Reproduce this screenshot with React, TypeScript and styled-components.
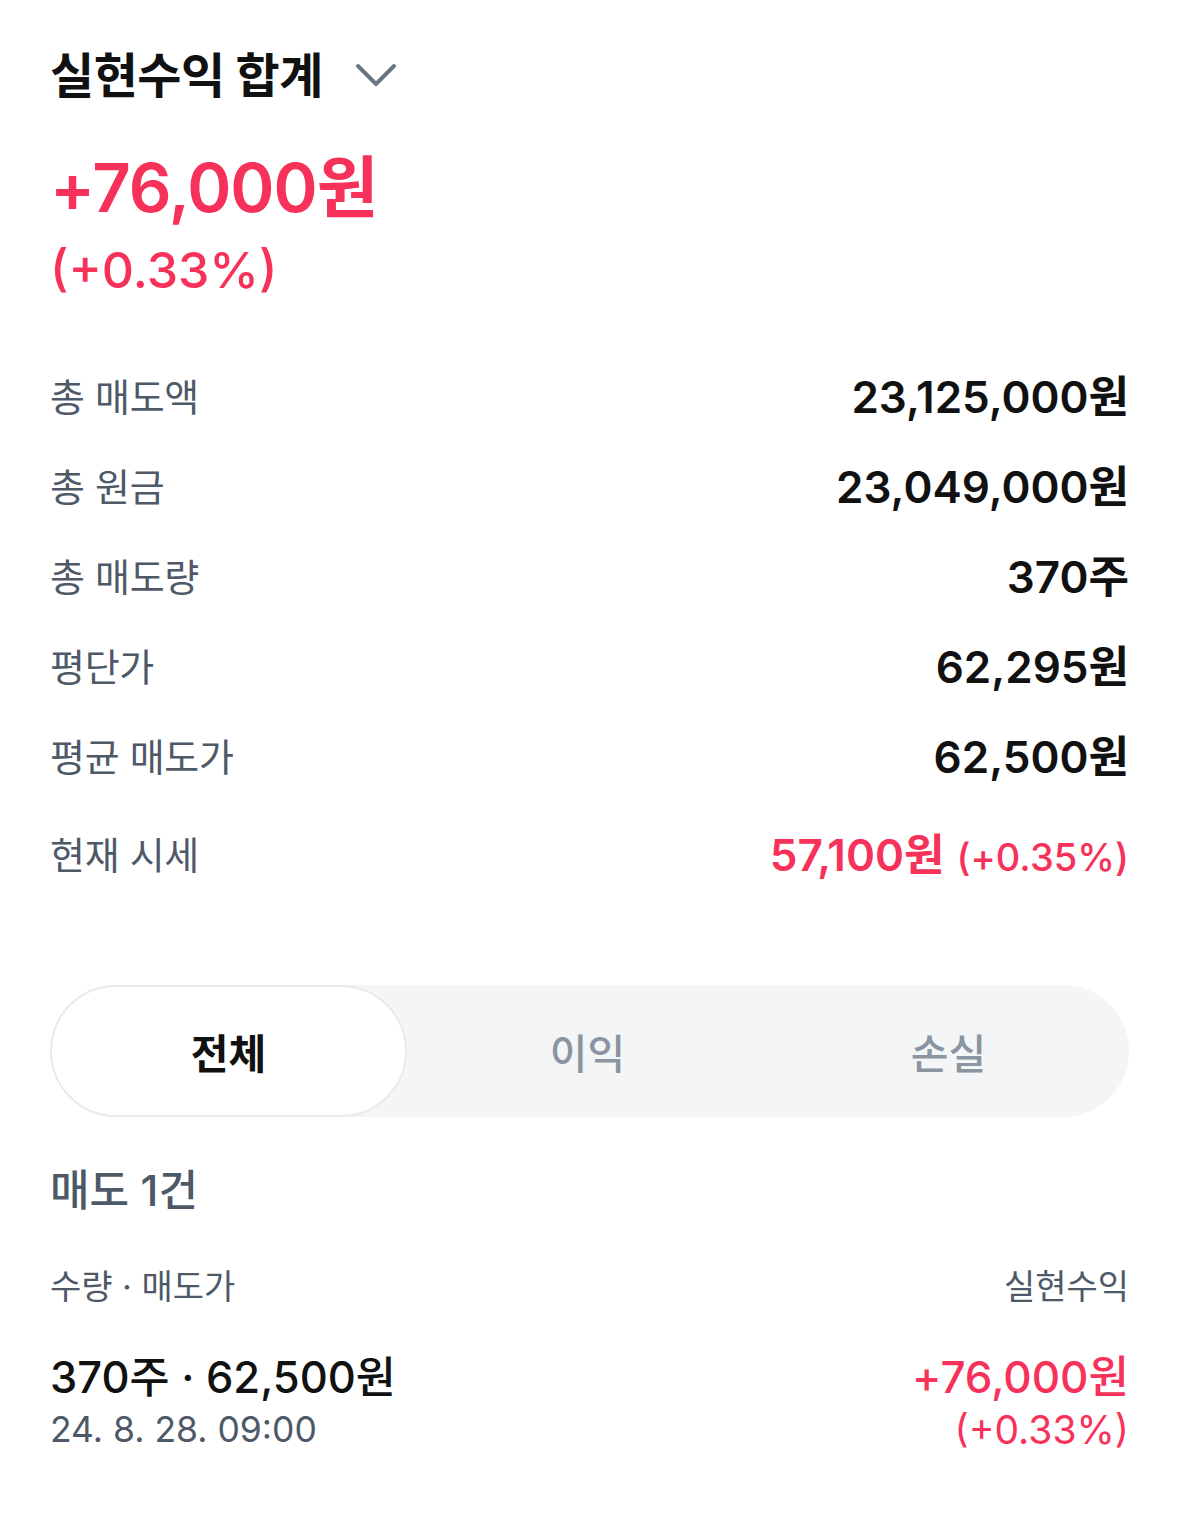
import * as React from 'react';
import styled, { createGlobalStyle } from 'styled-components';

const GlobalStyle = createGlobalStyle`
  body {
    margin: 0;
    background: #fff;
    font-family: Inter, "Noto Sans CJK KR", sans-serif;
    -webkit-font-smoothing: antialiased;
  }
`;

const RED = '#f7325a';
const GREY = '#4e5968';

const Page = styled.div`
  width: 1179px;
  box-sizing: border-box;
  padding: 46px 50px 60px 50px;
`;

const TitleRow = styled.div`
  display: flex;
  align-items: center;
  gap: 32px;
`;

const Title = styled.h1`
  margin: 0;
  font-size: 48px;
  line-height: 60px;
  font-weight: 700;
  color: #111;
  letter-spacing: -0.5px;
`;

const Chevron = styled.svg`
  width: 42px;
  height: 24px;
  margin-top: -2px;
`;

const BigAmount = styled.div`
  margin-top: 42px;
  font-size: 67px;
  line-height: 80px;
  font-weight: 600;
  color: ${RED};
  letter-spacing: -1px;
`;

const BigRate = styled.div`
  margin-top: 14px;
  font-size: 50px;
  line-height: 56px;
  font-weight: 500;
  color: ${RED};
`;

const Rows = styled.div`
  margin-top: 51px;
  display: flex;
  flex-direction: column;
`;

const Row = styled.div<{ $extra?: number }>`
  display: flex;
  justify-content: space-between;
  align-items: center;
  height: 90px;
  margin-top: ${p => p.$extra || 0}px;
`;

const Label = styled.span`
  font-size: 38px;
  color: ${GREY};
  letter-spacing: -0.3px;
`;

const Value = styled.span<{ $red?: boolean }>`
  font-size: 44px;
  font-weight: 600;
  color: ${p => (p.$red ? RED : '#111')};
`;

const SubValue = styled.span`
  font-size: 38px;
  font-weight: 500;
  color: ${RED};
  margin-left: 12px;
`;

const Tabs = styled.div`
  margin-top: 88px;
  height: 132px;
  border-radius: 66px;
  background: #f4f5f7;
  display: grid;
  grid-template-columns: 357px 1fr 1fr;
`;

const Tab = styled.div<{ $active?: boolean }>`
  display: flex;
  align-items: center;
  justify-content: center;
  font-size: 41px;
  font-weight: ${p => (p.$active ? 600 : 500)};
  color: ${p => (p.$active ? '#111' : '#8b95a1')};
  background: ${p => (p.$active ? '#fff' : 'transparent')};
  border: ${p => (p.$active ? '2px solid #e8ebee' : 'none')};
  border-radius: 66px;
`;

const SectionTitle = styled.div`
  margin-top: 43px;
  font-size: 43px;
  line-height: 60px;
  font-weight: 500;
  color: ${GREY};
`;

const HeadRow = styled.div`
  margin-top: 42px;
  display: flex;
  justify-content: space-between;
  font-size: 34px;
  line-height: 50px;
  color: ${GREY};
`;

const TradeRow = styled.div`
  margin-top: 37px;
  display: flex;
  justify-content: space-between;
`;

const Col = styled.div<{ $right?: boolean }>`
  display: flex;
  flex-direction: column;
  align-items: ${p => (p.$right ? 'flex-end' : 'flex-start')};
`;

const TradeMain = styled.div`
  font-size: 43.5px;
  line-height: 56px;
  font-weight: 500;
  color: #111;
`;

const TradeDate = styled.div`
  margin-top: 3px;
  font-size: 35.5px;
  line-height: 44px;
  color: ${GREY};
`;

const TradeProfit = styled.div`
  font-size: 44px;
  line-height: 56px;
  font-weight: 500;
  color: ${RED};
`;

const TradeRate = styled.div`
  margin-top: 3px;
  font-size: 39px;
  line-height: 44px;
  color: ${RED};
`;

const summary = [
  { label: '총 매도액', value: '23,125,000원' },
  { label: '총 원금', value: '23,049,000원' },
  { label: '총 매도량', value: '370주' },
  { label: '평단가', value: '62,295원' },
  { label: '평균 매도가', value: '62,500원' },
];

export default function App() {
  return (
    <Page>
      <GlobalStyle />
      <TitleRow>
        <Title>실현수익 합계</Title>
        <Chevron viewBox="0 0 42 24" fill="none">
          <path d="M3 3 L21 21 L39 3" stroke="#6b7684" strokeWidth="4" strokeLinecap="round" strokeLinejoin="round" />
        </Chevron>
      </TitleRow>
      <BigAmount>+76,000원</BigAmount>
      <BigRate>(+0.33%)</BigRate>

      <Rows>
        {summary.map(s => (
          <Row key={s.label}>
            <Label>{s.label}</Label>
            <Value>{s.value}</Value>
          </Row>
        ))}
        <Row $extra={8}>
          <Label>현재 시세</Label>
          <span>
            <Value $red>57,100원</Value>
            <SubValue>(+0.35%)</SubValue>
          </span>
        </Row>
      </Rows>

      <Tabs>
        <Tab $active>전체</Tab>
        <Tab>이익</Tab>
        <Tab>손실</Tab>
      </Tabs>

      <SectionTitle>매도 1건</SectionTitle>
      <HeadRow>
        <span>수량 · 매도가</span>
        <span>실현수익</span>
      </HeadRow>
      <TradeRow>
        <Col>
          <TradeMain>370주 · 62,500원</TradeMain>
          <TradeDate>24. 8. 28. 09:00</TradeDate>
        </Col>
        <Col $right>
          <TradeProfit>+76,000원</TradeProfit>
          <TradeRate>(+0.33%)</TradeRate>
        </Col>
      </TradeRow>
    </Page>
  );
}
